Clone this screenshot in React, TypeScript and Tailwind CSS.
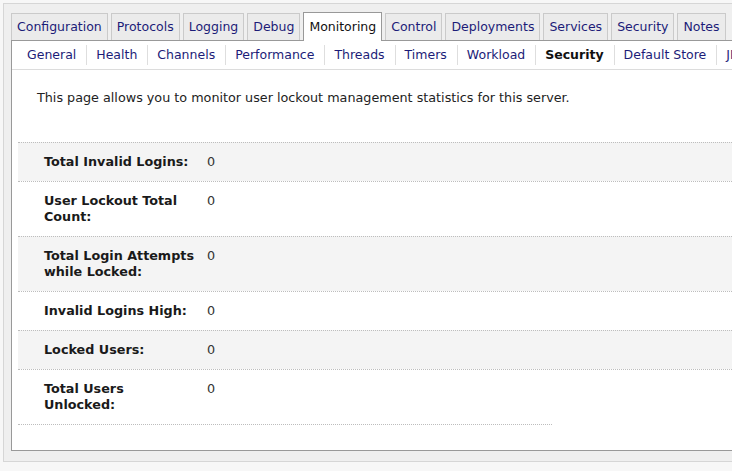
const tabs = ['Configuration', 'Protocols', 'Logging', 'Debug', 'Monitoring', 'Control', 'Deployments', 'Services', 'Security', 'Notes'];
const subtabs = ['General', 'Health', 'Channels', 'Performance', 'Threads', 'Timers', 'Workload', 'Security', 'Default Store', 'JMS'];

const rows = [
    { label: 'Total Invalid Logins:', value: '0' },
    { label: 'User Lockout Total Count:', value: '0' },
    { label: 'Total Login Attempts while Locked:', value: '0' },
    { label: 'Invalid Logins High:', value: '0' },
    { label: 'Locked Users:', value: '0' },
    { label: 'Total Users Unlocked:', value: '0' },
];

export default function App() {
    return (
        <div className="h-[471px] w-[732px] overflow-hidden bg-[#f7f7f7] pt-[3px] pl-[3px] font-['DejaVu_Sans',sans-serif] text-[12.75px]">
            <div className="w-[1000px] border-t border-l border-b border-[#d6d6d6] bg-[#efefef] pt-[8px] pl-[7px] pb-[10px]">
                {/* Main tabs */}
                <div className="flex items-end gap-[3px] text-[12.5px]">
                    {tabs.map((t) => {
                        const active = t === 'Monitoring';
                        return active ? (
                            <div
                                key={t}
                                className="relative z-10 -mb-px flex h-[29px] items-center border border-b-0 border-[#999] bg-white px-[5px] text-[#111]"
                            >
                                {t}
                            </div>
                        ) : (
                            <div
                                key={t}
                                className="flex h-[27px] items-center border border-b-0 border-[#cacaca] bg-[#ebebeb] px-[5px] text-[#1c1c78]"
                            >
                                {t}
                            </div>
                        );
                    })}
                </div>

                {/* Panel */}
                <div className="w-[900px] border border-[#999] bg-white">
                    <div className="flex h-[29px] items-center border-b border-[#dcdcdc] pl-[6px] text-[12.5px]">
                        {subtabs.map((s, i) => (
                            <div key={s} className="flex items-center">
                                {i > 0 && <span className="h-[20px] w-px bg-[#dedede]" />}
                                <span
                                    className={
                                        s === 'Security'
                                            ? 'pl-[9px] pr-[10px] font-bold text-[#111]'
                                            : 'pl-[9px] pr-[10px] text-[#1c1c78]'
                                    }
                                >
                                    {s}
                                </span>
                            </div>
                        ))}
                    </div>

                    <p className="mt-[19px] pl-[25px] leading-[17px] text-[#222]">
                        This page allows you to monitor user lockout management statistics for this server.
                    </p>

                    <div className="mt-[36px] ml-[6px] mb-[25px]">
                        {rows.map((r, i) => (
                            <div
                                key={r.label}
                                className={`flex border-t border-dotted border-[#bdbdbd] py-[11px] leading-[16px] ${
                                    i % 2 === 0 ? 'bg-[#f4f4f4]' : 'bg-white'
                                }`}
                            >
                                <div className="w-[189px] pl-[26px] pr-[12px] font-bold text-[#1a1a1a]">{r.label}</div>
                                <div className="text-[#333]">{r.value}</div>
                            </div>
                        ))}
                        <div className="w-[534px] border-t border-dotted border-[#bdbdbd]" />
                    </div>
                </div>
            </div>
        </div>
    );
}
